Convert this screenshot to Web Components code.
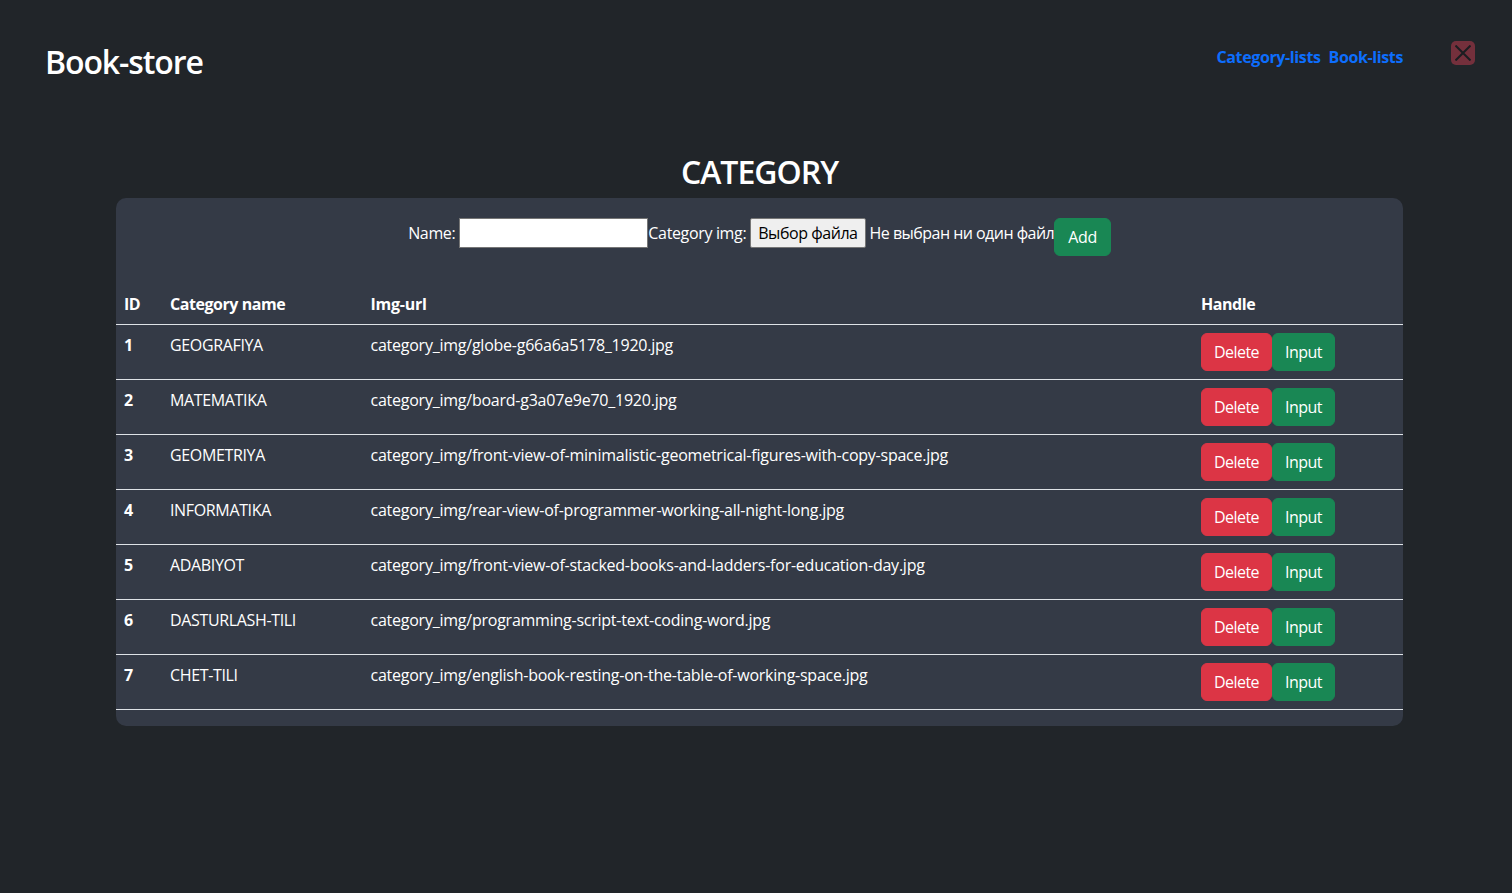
<!DOCTYPE html>
<html lang="en">
<head>
<meta charset="utf-8">
<title>Book-store</title>
<style>
  html, body { margin: 0; height: 100%; }
  body {
    background: #212529;
    color: #fff;
    font: 16px/24px "Open Sans", "Noto Sans", sans-serif;
    letter-spacing: -0.35px;
  }
</style>
</head>
<body>
<book-app></book-app>
<script>
const rows = [
  ["1", "GEOGRAFIYA", "category_img/globe-g66a6a5178_1920.jpg"],
  ["2", "MATEMATIKA", "category_img/board-g3a07e9e70_1920.jpg"],
  ["3", "GEOMETRIYA", "category_img/front-view-of-minimalistic-geometrical-figures-with-copy-space.jpg"],
  ["4", "INFORMATIKA", "category_img/rear-view-of-programmer-working-all-night-long.jpg"],
  ["5", "ADABIYOT", "category_img/front-view-of-stacked-books-and-ladders-for-education-day.jpg"],
  ["6", "DASTURLASH-TILI", "category_img/programming-script-text-coding-word.jpg"],
  ["7", "CHET-TILI", "category_img/english-book-resting-on-the-table-of-working-space.jpg"],
];

class BookButton extends HTMLElement {
  constructor() {
    super();
    this.attachShadow({ mode: "open" }).innerHTML = `
      <style>
        :host { display: inline-flex; }
        button {
          height: 38px;
          padding: 0 12px;
          border: 1px solid var(--bg);
          border-radius: 6px;
          background: var(--bg);
          color: #fff;
          font: inherit;
          letter-spacing: -0.55px;
        }
        :host([kind="danger"]) { --bg: #dc3545; }
        :host([kind="success"]) { --bg: #198754; }
        :host([wide]) button { padding: 0 13px; letter-spacing: -0.35px; }
      </style>
      <button type="button"><slot></slot></button>`;
  }
}

class BookHeader extends HTMLElement {
  constructor() {
    super();
    this.attachShadow({ mode: "open" }).innerHTML = `
      <style>
        :host {
          display: flex;
          align-items: flex-start;
          padding: 41px 37px 0 45px;
          height: 115px;
          box-sizing: border-box;
        }
        h1 { margin: 1px 0 0; font-size: 32px; line-height: 40px; font-weight: 600; letter-spacing: -1.1px; }
        nav { margin-left: auto; display: flex; gap: 8px; margin-top: 4px; }
        a { color: #0d6efd; font-weight: 700; text-decoration: none; letter-spacing: -0.38px; }
        .close {
          width: 24px; height: 24px; margin-left: 48px;
          border-radius: 5px; background: #74303c;
          display: flex; align-items: center; justify-content: center;
        }
      </style>
      <h1>Book-store</h1>
      <nav><a href="#">Category-lists</a><a href="#">Book-lists</a></nav>
      <div class="close">
        <svg width="16" height="16" viewBox="0 0 16 16"><path d="M.5.5l15 15M15.5.5l-15 15" stroke="#1b1d21" stroke-width="2" fill="none"/></svg>
      </div>`;
  }
}

class CategoryForm extends HTMLElement {
  constructor() {
    super();
    this.attachShadow({ mode: "open" }).innerHTML = `
      <style>
        :host {
          display: flex;
          justify-content: center;
          align-items: flex-start;
          height: 74px;
          box-sizing: border-box;
          padding-top: 20px;
        }
        label { display: flex; align-items: center; height: 30px; }
        input {
          width: 189px; height: 30px; box-sizing: border-box; margin-left: 4px;
          border: 1px solid #767676; background: #fff; padding: 1px 2px;
        }
        .file {
          height: 30px; box-sizing: border-box; margin: 0 4px;
          border: 1px solid #767676; border-radius: 2px; background: #efefef;
          color: #000; padding: 0 7px; font: inherit; letter-spacing: -0.45px;
        }
        .none { letter-spacing: -0.53px; }
      </style>
      <label>Name:<input type="text"></label>
      <label>Category img:<button class="file" type="button">Выбор файла</button><span class="none">Не выбран ни один файл</span></label>
      <book-button kind="success" wide>Add</book-button>`;
  }
}

class CategoryRow extends HTMLElement {
  constructor() {
    super();
    this.attachShadow({ mode: "open" }).innerHTML = `
      <style>
        :host {
          display: grid;
          grid-template-columns: 46px 200.5px 830.5px 1fr;
          border-bottom: 1px solid #dee2e6;
          padding: 8px 0;
        }
        .cell { padding: 0 8px; min-height: 24px; }
        :host([head]) { font-weight: 700; letter-spacing: -0.45px; }
        .handle { display: flex; }
        .id { font-weight: 700; }
        .url { letter-spacing: -0.24px; }
      </style>
      <div class="cell id"><slot name="id"></slot></div>
      <div class="cell"><slot name="name"></slot></div>
      <div class="cell url"><slot name="url"></slot></div>
      <div class="cell handle"><slot name="handle"></slot></div>`;
  }
}

class CategoryPanel extends HTMLElement {
  constructor() {
    super();
    const body = rows.map(([id, name, url]) => `
      <category-row>
        <span slot="id">${id}</span>
        <span slot="name">${name}</span>
        <span slot="url">${url}</span>
        <span slot="handle" class="btns"><book-button kind="danger">Delete</book-button><book-button kind="success">Input</book-button></span>
      </category-row>`).join("");
    this.attachShadow({ mode: "open" }).innerHTML = `
      <style>
        :host { display: block; width: 1287px; margin-left: 116px; }
        h2 { margin: 0; text-align: center; font-size: 32px; line-height: 38px; font-weight: 600; height: 45px; letter-spacing: -1px; }
        .panel { background: #343a46; border-radius: 10px; padding-bottom: 16px; }
        .btns { display: flex; }
        category-row span { display: block; }
        category-row[head] { padding-top: 20px; }
      </style>
      <h2>CATEGORY</h2>
      <div class="panel">
        <category-form></category-form>
        <category-row head>
          <span slot="id">ID</span>
          <span slot="name">Category name</span>
          <span slot="url">Img-url</span>
          <span slot="handle">Handle</span>
        </category-row>
        ${body}
      </div>`;
  }
}

class BookApp extends HTMLElement {
  constructor() {
    super();
    this.attachShadow({ mode: "open" }).innerHTML = `
      <style>
        :host { display: block; }
        category-panel { margin-top: 38px; }
      </style>
      <book-header></book-header>
      <category-panel></category-panel>`;
  }
}

customElements.define("book-button", BookButton);
customElements.define("book-header", BookHeader);
customElements.define("category-form", CategoryForm);
customElements.define("category-row", CategoryRow);
customElements.define("category-panel", CategoryPanel);
customElements.define("book-app", BookApp);
</script>
</body>
</html>
